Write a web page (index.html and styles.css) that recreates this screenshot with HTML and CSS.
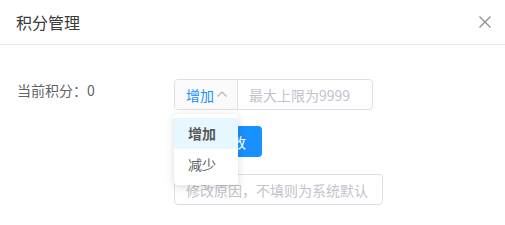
FILE: index.html
```html
<!DOCTYPE html>
<html lang="zh">
<head>
<meta charset="utf-8">
<title>积分管理</title>
<link rel="stylesheet" href="styles.css">
</head>
<body>
<div class="dialog">
  <div class="header">
    <span class="title">积分管理</span>
    <svg class="close" width="12" height="12" viewBox="0 0 12 12"><path d="M0.5 0.5 L11.5 11.5 M11.5 0.5 L0.5 11.5" stroke="#8c8c8c" stroke-width="1.2" fill="none"/></svg>
  </div>
  <div class="form">
    <div class="label">当前积分：0</div>
    <div class="controls">
      <div class="group-wrap">
        <div class="group">
          <div class="prepend">增加<svg class="arrow" width="10" height="6" viewBox="0 0 10 6"><path d="M0.5 5.5 L5 1 L9.5 5.5" stroke="#b4b4b4" stroke-width="1.1" fill="none"/></svg></div>
          <div class="field placeholder">最大上限为9999</div>
        </div>
        <ul class="menu">
          <li class="item active">增加</li>
          <li class="item">减少</li>
        </ul>
      </div>
      <button class="btn">确认修改</button>
      <div class="reason placeholder">修改原因，不填则为系统默认</div>
    </div>
  </div>
</div>
</body>
</html>
```
FILE: styles.css
```css
* { box-sizing: border-box; }
html, body { margin: 0; padding: 0; background: #fff; }
body {
  font-family: "Noto Sans CJK SC", "Noto Sans", sans-serif;
  font-size: 14px;
  color: #606266;
}
.dialog { width: 505px; height: 225px; background: #fff; }
.header {
  height: 45px;
  border-bottom: 1px solid #e8e8e8;
  display: flex;
  align-items: center;
  justify-content: space-between;
  padding: 0 14px 0 16px;
}
.title { font-size: 16px; color: #3a3a3a; line-height: 20px; margin-top: -1px; }
.close { display: block; }
.form {
  display: grid;
  grid-template-columns: 157px auto;
  padding: 34px 0 0 17px;
}
.label { line-height: 22px; color: #606266; }
.controls {
  display: flex;
  flex-direction: column;
  align-items: flex-start;
  gap: 16px;
}
.group-wrap { position: relative; }
.group {
  display: flex;
  width: 199px;
  height: 31px;
  border: 1px solid #dcdfe6;
  border-radius: 4px;
  overflow: hidden;
}
.prepend {
  width: 63px;
  background: #fafafa;
  border-right: 1px solid #dcdfe6;
  color: #1890ff;
  display: flex;
  align-items: center;
  padding-left: 11px;
  gap: 3px;
}
.arrow { display: block; margin-top: -1px; }
.field {
  flex: 1;
  display: flex;
  align-items: center;
  padding-left: 11px;
}
.placeholder { color: #c0c4cc; }
.menu {
  position: absolute;
  left: 0;
  top: 35px;
  width: 64px;
  margin: 0;
  padding: 4px 0 5px;
  list-style: none;
  background: #fff;
  border-radius: 4px;
  box-shadow: 0 2px 8px rgba(0, 0, 0, 0.15);
  z-index: 2;
}
.item { height: 31px; line-height: 31px; padding-left: 14px; color: #606266; }
.item.active { background: #e6f7ff; font-weight: 600; color: #595959; }
.btn {
  width: 88px;
  height: 31px;
  border: none;
  border-radius: 4px;
  background: #1890ff;
  color: #fff;
  font-family: inherit;
  font-size: 14px;
  padding: 0;
}
.reason {
  width: 209px;
  height: 31px;
  margin-top: 1px;
  border: 1px solid #dcdfe6;
  border-radius: 4px;
  display: flex;
  align-items: center;
  padding-left: 11px;
  white-space: nowrap;
}
```
